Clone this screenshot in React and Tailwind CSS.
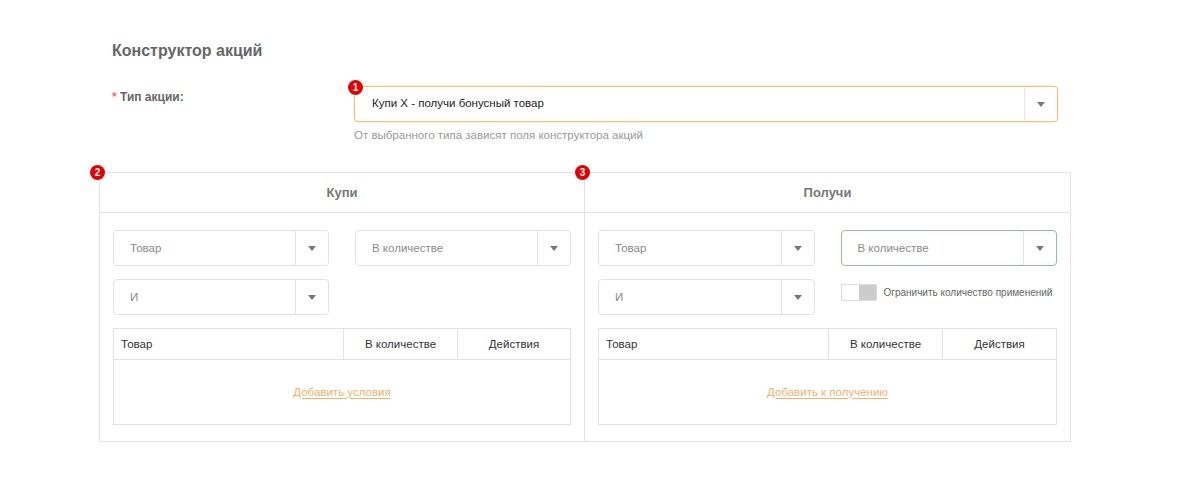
import { useState } from "react";

const Badge = ({ n, className = "" }) => (
  <span
    className={`absolute flex h-[15px] w-[15px] items-center justify-center rounded-full bg-[#e60000] text-[10px] font-bold leading-none text-white ring-1 ring-white ${className}`}
  >
    {n}
  </span>
);

const Caret = () => (
  <svg width="8" height="5" viewBox="0 0 8 5" className="fill-[#777]">
    <path d="M0 0h8L4 5z" />
  </svg>
);

const Select = ({ value, green }) => (
  <div
    className={`flex h-9 items-stretch rounded-[4px] border bg-white ${
      green ? "border-[#8fc28f]" : "border-[#e3e3e3]"
    }`}
  >
    <div className="flex flex-1 items-center pl-4 text-[11.5px] text-[#8a8a8a]">{value}</div>
    <div className="flex w-[33px] items-center justify-center border-l border-[#e3e3e3]">
      <Caret />
    </div>
  </div>
);

const ConditionsTable = ({ link }) => (
  <div className="border border-[#e3e3e3]">
    <div className="grid h-[31px] grid-cols-[229px_114px_1fr] border-b border-[#e3e3e3] text-[11.5px] text-[#333]">
      <div className="flex items-center pl-[7px]">Товар</div>
      <div className="flex items-center justify-center border-l border-[#e3e3e3]">В количестве</div>
      <div className="flex items-center justify-center border-l border-[#e3e3e3]">Действия</div>
    </div>
    <div className="flex h-[64px] items-center justify-center">
      <a href="#" className="text-[11.5px] text-[#f5b06a] underline underline-offset-2">
        {link}
      </a>
    </div>
  </div>
);

const Panel = ({ title, badge, left, children }) => (
  <div className={`relative border-y border-r border-[#e3e3e3] ${left ? "border-l" : ""}`}>
    <Badge n={badge} className="-left-[10px] -top-[8px]" />
    <div className="flex h-10 items-center justify-center border-b border-[#e3e3e3] text-[13px] font-bold text-[#777]">
      {title}
    </div>
    <div className="px-[13px] pb-4 pt-[17px]">{children}</div>
  </div>
);

export default function App() {
  const [limit, setLimit] = useState(false);

  return (
    <div className="min-h-[491px] bg-white pt-[41px] font-['Liberation_Sans',Arial,sans-serif]">
      <div className="pl-[112px]">
        <h1 className="text-[16px] font-bold leading-5 text-[#666]">Конструктор акций</h1>

        <div className="mt-[25px] flex">
          <div className="w-[242px] pt-[2px] text-[12px] font-bold text-[#666]">
            <span className="text-[#f56c6c]">*</span> Тип акции:
          </div>
          <div className="w-[704px]">
            <div className="relative">
              <Badge n="1" className="-left-[6px] -top-[6px]" />
              <div className="flex h-9 items-stretch rounded-[4px] border border-[#ffb870] bg-white shadow-[0_0_2px_rgba(255,170,90,0.5)]">
                <div className="flex flex-1 items-center pl-[17px] text-[11.5px] text-[#222]">
                  Купи X - получи бонусный товар
                </div>
                <div className="flex w-[33px] items-center justify-center border-l border-[#e6e6e6]">
                  <Caret />
                </div>
              </div>
            </div>
            <p className="mt-[5px] text-[11.5px] text-[#999]">От выбранного типа зависят поля конструктора акций</p>
          </div>
        </div>
      </div>

      <div className="ml-[99px] mt-[28px] grid w-[972px] grid-cols-2">
        <Panel title="Купи" badge="2" left>
          <div className="grid grid-cols-2 gap-x-[26px] gap-y-[13px]">
            <Select value="Товар" />
            <Select value="В количестве" />
            <Select value="И" />
          </div>
          <div className="mt-[13px]">
            <ConditionsTable link="Добавить условия" />
          </div>
        </Panel>

        <Panel title="Получи" badge="3">
          <div className="grid grid-cols-2 gap-x-[26px] gap-y-[13px]">
            <Select value="Товар" />
            <Select value="В количестве" green />
            <Select value="И" />
            <div className="flex h-9 items-start gap-[7px] pt-[5px]">
              <button
                onClick={() => setLimit(!limit)}
                className="flex h-[17px] w-9 shrink-0 border border-[#ddd] bg-[#ccc]"
              >
                <span className="h-full w-1/2 bg-white" />
              </button>
              <span className="whitespace-nowrap text-[10px] leading-[17px] text-[#666]">
                Ограничить количество применений
              </span>
            </div>
          </div>
          <div className="mt-[13px]">
            <ConditionsTable link="Добавить к получению" />
          </div>
        </Panel>
      </div>
    </div>
  );
}
